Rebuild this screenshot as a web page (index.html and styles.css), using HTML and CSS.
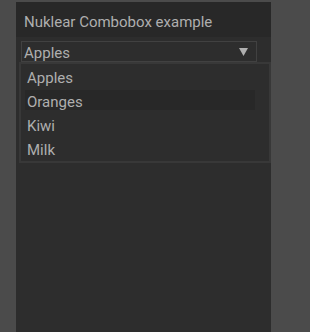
FILE: index.html
```html
<!DOCTYPE html>
<html lang="en">
<head>
    <meta charset="UTF-8">
    <meta name="viewport" content="width=device-width, initial-scale=1.0">
    <title>Nuklear Combobox example</title>
    <link rel="stylesheet" href="styles.css">
</head>
<body>
    <div class="window">
        <div class="header">Nuklear Combobox example</div>
        <div class="content">
            <div class="combo">
                <span class="combo-value">Apples</span>
                <svg class="arrow" width="9" height="8" viewBox="0 0 9 8">
                    <polygon points="0,0 9,0 4.5,8" fill="#afafaf"/>
                </svg>
            </div>
            <div class="popup">
                <div class="item">Apples</div>
                <div class="item hover">Oranges</div>
                <div class="item">Kiwi</div>
                <div class="item">Milk</div>
            </div>
        </div>
    </div>
</body>
</html>
```

FILE: styles.css
```css
body, html {
    margin: 0;
    height: 100%;
    background: #4b4b4b;
    font-family: Roboto, "Liberation Sans", sans-serif;
    font-size: 15px;
    color: #afafaf;
    overflow: hidden;
}
.window {
    margin: 2px 0 0 16px;
    width: 255px;
    height: 330px;
    background: #2d2d2d;
}
.header {
    height: 31px;
    line-height: 32px;
    padding: 4px 0 0 8px;
    background: #282828;
}
.content {
    display: flex;
    flex-direction: column;
    padding: 4px 0 0 3px;
}
.combo {
    display: flex;
    align-items: center;
    justify-content: space-between;
    box-sizing: border-box;
    width: 236px;
    height: 21px;
    margin-left: 2px;
    padding: 0 8px 0 2px;
    border: 1px solid #414141;
}
.combo-value {
    line-height: 19px;
    margin-top: 4px;
}
.arrow {
    display: block;
}
.popup {
    display: flex;
    flex-direction: column;
    gap: 4px;
    box-sizing: border-box;
    width: 252px;
    height: 101px;
    padding: 2px 14px 0 4px;
    border: 2px solid #383838;
}
.item {
    height: 20px;
    line-height: 24px;
    padding-left: 2px;
}
.item.hover {
    background: #282828;
}
```
